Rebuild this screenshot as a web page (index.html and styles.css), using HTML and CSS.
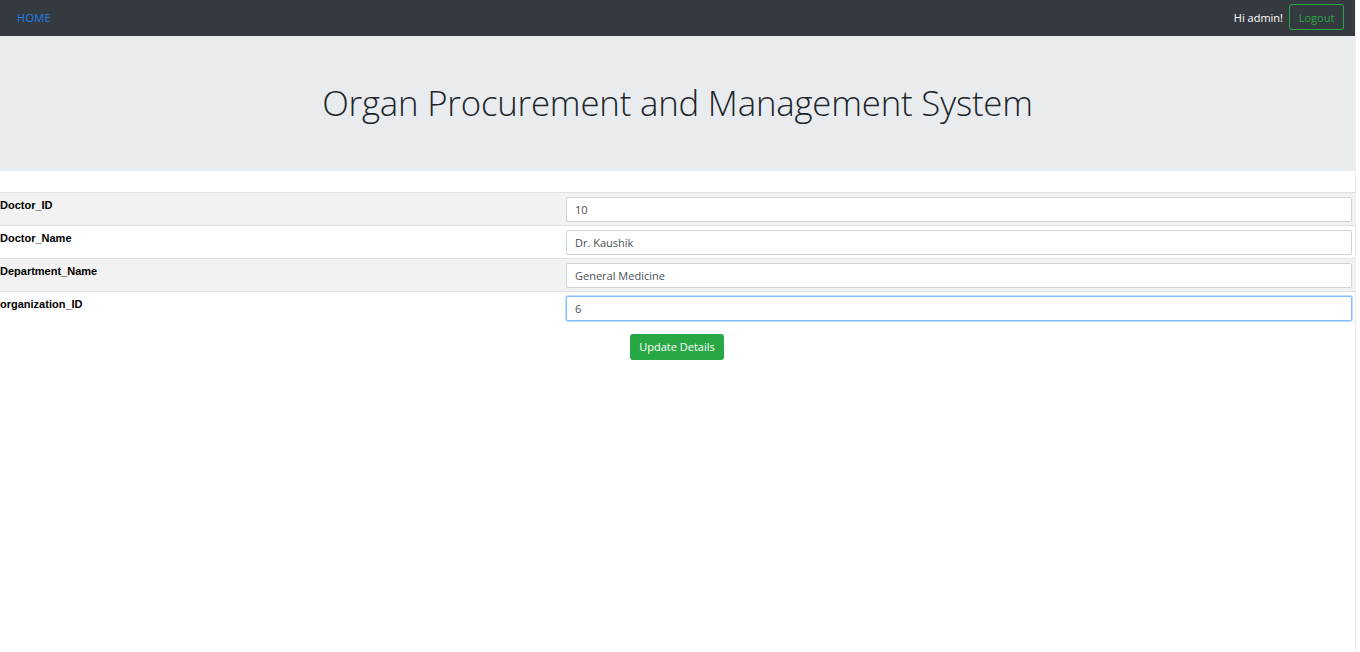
FILE: index.html
```html
<!DOCTYPE html>
<html>
<head>
<meta charset="utf-8">
<link rel="stylesheet" href="styles.css">
</head>
<body>
<div class="page">
  <nav class="navbar">
    <a class="nav-home" href="#">HOME</a>
    <div class="nav-right">
      <span class="greet">Hi admin!</span>
      <button class="btn-logout">Logout</button>
    </div>
  </nav>
  <header class="jumbotron">
    <h1 class="title">Organ Procurement and Management System</h1>
  </header>
  <form class="details">
    <table class="grid">
      <tr class="row odd">
        <th class="label">Doctor_ID</th>
        <td class="field"><input class="input" type="text" value="10"></td>
      </tr>
      <tr class="row">
        <th class="label">Doctor_Name</th>
        <td class="field"><input class="input" type="text" value="Dr. Kaushik"></td>
      </tr>
      <tr class="row odd">
        <th class="label">Department_Name</th>
        <td class="field"><input class="input" type="text" value="General Medicine"></td>
      </tr>
      <tr class="row">
        <th class="label">organization_ID</th>
        <td class="field"><input class="input focus" type="text" value="6"></td>
      </tr>
    </table>
    <div class="actions">
      <button class="btn-update" type="button">Update Details</button>
    </div>
  </form>
</div>
</body>
</html>
```

FILE: styles.css
```css
html, body {
  margin: 0;
  padding: 0;
  background: #fff;
}
body {
  font-family: "Open Sans", "Noto Sans", sans-serif;
  color: #212529;
}
.page {
  width: 1356px;
  min-height: 652px;
  border-right: 1px solid #eceeef;
  box-sizing: border-box;
}
.navbar {
  height: 36px;
  box-sizing: border-box;
  background: #343a40;
  display: flex;
  align-items: center;
  justify-content: space-between;
  padding: 0 11px 2px 17px;
}
.nav-home {
  color: #1a7ee8;
  font-size: 11px;
  text-decoration: none;
  letter-spacing: 0.3px;
}
.nav-right {
  display: flex;
  align-items: center;
  gap: 6px;
}
.greet {
  color: #fff;
  font-size: 11px;
}
.btn-logout {
  height: 26px;
  width: 55px;
  border: 1px solid #28a745;
  border-radius: 3px;
  background: transparent;
  color: #28a745;
  font-family: inherit;
  font-size: 11px;
  padding: 0;
}
.jumbotron {
  height: 135px;
  background: #e9ecef;
  display: flex;
  align-items: center;
  justify-content: center;
  margin-bottom: 21px;
}
.title {
  margin: 0 0 2px 0;
  font-weight: 300;
  font-size: 34.8px;
  color: #212529;
  letter-spacing: -0.2px;
}
.grid {
  width: 100%;
  border-collapse: collapse;
}
.row {
  height: 33px;
  border-top: 1px solid #dee2e6;
}
.row.odd {
  background: #f2f2f2;
}
.label {
  width: 563px;
  text-align: left;
  vertical-align: top;
  padding: 6px 0 0 0;
  font-family: "Liberation Sans", Arial, sans-serif;
  font-size: 11px;
  font-weight: bold;
  color: #000;
}
.field {
  padding: 4px 3px 3px 3px;
  vertical-align: top;
}
.input {
  display: block;
  width: 100%;
  height: 25px;
  box-sizing: border-box;
  border: 1px solid #ced4da;
  border-radius: 2px;
  background: #fff;
  padding: 0 8px;
  font-family: "Open Sans", sans-serif;
  font-size: 11px;
  color: #495057;
}
.input.focus {
  border-color: #80bdff;
  box-shadow: 0 0 0 1px rgba(0, 123, 255, 0.25);
  outline: none;
}
.actions {
  padding: 9px 0 0 630px;
}
.btn-update {
  width: 94px;
  height: 26px;
  background: #28a745;
  color: #fff;
  border: none;
  border-radius: 3px;
  font-family: "Open Sans", sans-serif;
  font-size: 11px;
  padding: 0;
}
```
